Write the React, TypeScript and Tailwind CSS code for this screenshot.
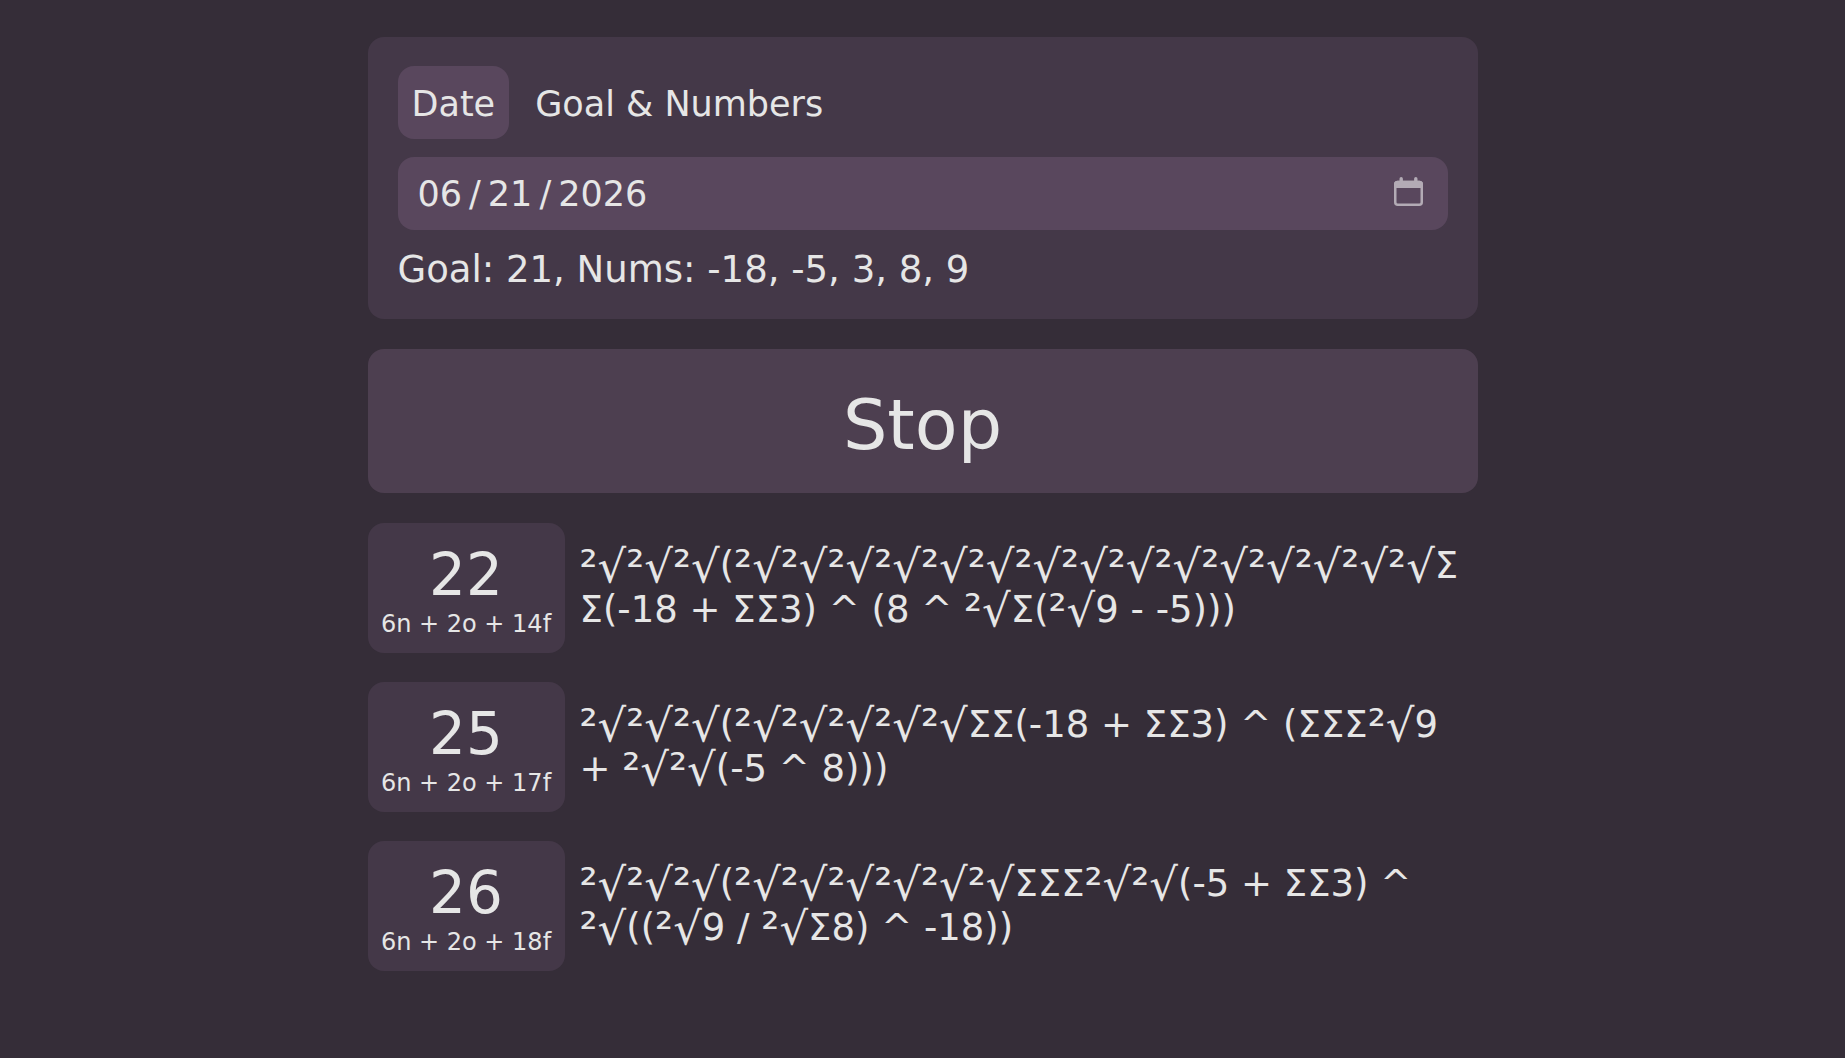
import { useState } from "react";

type Mode = "date" | "custom";

const solutions = [
  {
    score: 22,
    detail: "6n + 2o + 14f",
    lines: [
      "²√²√²√(²√²√²√²√²√²√²√²√²√²√²√²√²√²√²√Σ",
      "Σ(-18 + ΣΣ3) ^ (8 ^ ²√Σ(²√9 - -5)))",
    ],
  },
  {
    score: 25,
    detail: "6n + 2o + 17f",
    lines: ["²√²√²√(²√²√²√²√²√ΣΣ(-18 + ΣΣ3) ^ (ΣΣΣ²√9", "+ ²√²√(-5 ^ 8)))"],
  },
  {
    score: 26,
    detail: "6n + 2o + 18f",
    lines: ["²√²√²√(²√²√²√²√²√²√ΣΣΣ²√²√(-5 + ΣΣ3) ^", "²√((²√9 / ²√Σ8) ^ -18))"],
  },
];

function CalendarIcon() {
  return (
    <svg
      viewBox="0 0 29 29"
      aria-hidden="true"
      className="pointer-events-none absolute top-[20px] right-[25px] size-[29px] text-[#b3abb5]"
    >
      <rect x="1.25" y="5" width="26.5" height="22.75" rx="2.5" fill="none" stroke="currentColor" strokeWidth="2.5" />
      <path
        d="M0 11V7.5a3.75 3.75 0 0 1 3.75-3.75H5.5V1.7a1.7 1.7 0 0 1 3.4 0v2.05h11.2V1.7a1.7 1.7 0 0 1 3.4 0v2.05h1.75A3.75 3.75 0 0 1 29 7.5V11z"
        fill="currentColor"
      />
    </svg>
  );
}

// Root operators are set a little larger than the digits around them
function Expression({ text }: { text: string }) {
  return (
    <span className="block whitespace-nowrap">
      {text.split(/((?:²√)+)/).map((part, i) =>
        part.startsWith("²√") ? (
          <span key={i} className="align-[-4px] text-[45px] leading-[0px]">
            {part}
          </span>
        ) : (
          part
        )
      )}
    </span>
  );
}

export default function App() {
  const [mode, setMode] = useState<Mode>("date");
  const [date, setDate] = useState("2026-06-21");

  const tab = "h-[73px] rounded-2xl px-[14px] pt-[3px]";

  return (
    <div className="min-h-screen bg-[#352d38] px-4 pt-[37px] pb-8 font-['Verdana','DejaVu_Sans',sans-serif] text-[37px] leading-[44px] text-[#e6e6e6]">
      <main className="mx-auto flex max-w-[1110px] flex-col gap-[30px]">
        <section className="flex flex-col rounded-2xl bg-[#443848] px-[30px] pt-[29px] pb-[27px]">
          <div className="flex gap-3 text-[35px]">
            <button
              type="button"
              onClick={() => setMode("date")}
              className={mode === "date" ? `${tab} bg-[#59475d]` : tab}
            >
              Date
            </button>
            <button
              type="button"
              onClick={() => setMode("custom")}
              className={mode === "custom" ? `${tab} bg-[#59475d]` : tab}
            >
              Goal &amp; Numbers
            </button>
          </div>
          <div className="relative mt-[18px] text-[35px]">
            <input
              type="date"
              aria-label="Date"
              value={date}
              onChange={(e) => setDate(e.target.value)}
              className="block h-[73px] w-full rounded-2xl bg-[#59475d] px-[19px] [&::-webkit-calendar-picker-indicator]:opacity-0 [&::-webkit-datetime-edit-text]:px-[6px]"
            />
            <CalendarIcon />
          </div>
          <p className="mt-[18px]">Goal: 21, Nums: -18, -5, 3, 8, 9</p>
        </section>

        <button
          type="button"
          className="h-36 rounded-2xl bg-[#4d3f50] pt-[8px] text-[70px] leading-[84px]"
        >
          Stop
        </button>

        <ul className="flex flex-col gap-[29px]">
          {solutions.map((s) => (
            <li key={s.score} className="flex items-center gap-[15px]">
              <div className="flex h-[130px] w-[197px] shrink-0 flex-col items-center justify-center rounded-2xl bg-[#443848] pt-[4px]">
                <span className="text-[58px] leading-[68px]">{s.score}</span>
                <span className="text-[24px] leading-[30px] whitespace-nowrap">{s.detail}</span>
              </div>
              <div>
                {s.lines.map((line) => (
                  <Expression key={line} text={line} />
                ))}
              </div>
            </li>
          ))}
        </ul>
      </main>
    </div>
  );
}
